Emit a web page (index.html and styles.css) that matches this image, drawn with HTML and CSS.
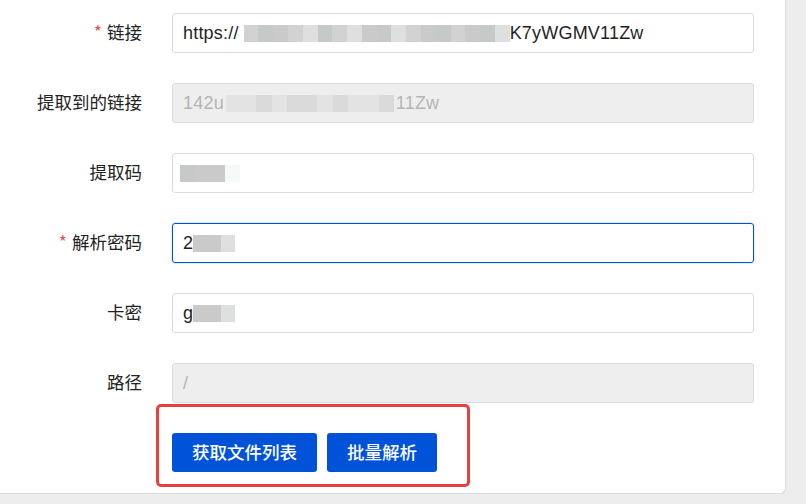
FILE: index.html
```
<html>
<head>
    <meta charset="UTF-8">
    <meta name="viewport" content="width=device-width, initial-scale=1.0">
    <link rel="stylesheet" href="styles.css">
</head>
<body>
    <div class="panel">
        <div class="form">
            <div class="row">
                <label class="label"><span class="req">*</span>链接</label>
                <div class="input">https://<span class="mosaic wide"><i class="c1"></i><i class="c2"></i><i class="c3"></i><i class="c1"></i><i class="c4"></i><i class="c2"></i><i class="c1"></i><i class="c4"></i><i class="c3"></i><i class="c2"></i><i class="c4"></i><i class="c1"></i><i class="c3"></i><i class="c2"></i><i class="c1"></i><i class="c3"></i><i class="c2"></i><i class="c4"></i></span>K7yWGMV11Zw</div>
            </div>
            <div class="row">
                <label class="label">提取到的链接</label>
                <div class="input disabled">142u<span class="mosaic mid"><i class="c5"></i><i class="c5"></i><i class="c6"></i><i class="c5"></i><i class="c6"></i><i class="c6"></i><i class="c5"></i><i class="c6"></i><i class="c5"></i><i class="c5"></i><i class="c6"></i></span>11Zw</div>
            </div>
            <div class="row">
                <label class="label">提取码</label>
                <div class="input"><span class="mosaic short"><i class="c2"></i><i class="c3"></i><i class="c3"></i><i class="c7"></i></span></div>
            </div>
            <div class="row">
                <label class="label"><span class="req">*</span>解析密码</label>
                <div class="input focus">2<span class="mosaic tiny"><i class="c3"></i><i class="c3"></i><i class="c4"></i></span></div>
            </div>
            <div class="row">
                <label class="label">卡密</label>
                <div class="input">g<span class="mosaic tiny"><i class="c3"></i><i class="c3"></i><i class="c4"></i></span></div>
            </div>
            <div class="row">
                <label class="label">路径</label>
                <div class="input disabled">/</div>
            </div>
        </div>
        <div class="mark">
            <button class="btn">获取文件列表</button>
            <button class="btn">批量解析</button>
        </div>
    </div>
</body>
</html>
```

FILE: styles.css
```
* {
    box-sizing: border-box;
}

body {
    margin: 0;
    background: #ededed;
    font-family: "Liberation Sans", "Noto Sans CJK SC", sans-serif;
    font-size: 17px;
    color: #222;
}

.panel {
    width: 786px;
    height: 494px;
    background: white;
    border-right: 1px solid #dcdcdc;
    border-bottom: 1px solid #dcdcdc;
    border-bottom-right-radius: 6px;
    padding-top: 13px;
}

.form {
    display: flex;
    flex-direction: column;
    gap: 30px;
}

.row {
    display: grid;
    grid-template-columns: 142px 582px;
    column-gap: 30px;
    align-items: center;
}

.label {
    text-align: right;
    font-family: "Noto Sans CJK SC", sans-serif;
    font-size: 17.5px;
    color: #222;
    padding-bottom: 3px;
}

.req {
    color: #e34d59;
    margin-right: 5px;
}

.input {
    height: 40px;
    border: 1px solid #dcdcdc;
    border-radius: 3px;
    padding: 0 10px;
    display: flex;
    align-items: center;
    white-space: nowrap;
    font-size: 18px;
    letter-spacing: 0.2px;
    color: #1f1f1f;
}

.input.disabled {
    background: #eeeeee;
    color: #b5b5b5;
}

.input.focus {
    border-color: #0052d9;
    box-shadow: 0 0 0 1px rgba(0, 82, 217, 0.12);
}

.mosaic {
    display: inline-flex;
    height: 17px;
    margin: 0 2px;
}

.mosaic i {
    flex: 1;
}

.wide { width: 266px; margin-left: 5px; margin-right: 0; }
.mid { width: 168px; }
.short { width: 60px; margin-left: -3px; }
.tiny { width: 42px; margin-left: 0; }

.c1 { background: #d2d2d2; }
.c2 { background: #c6c9c9; }
.c3 { background: #cbcaca; }
.c4 { background: #dedfdf; }
.c5 { background: #e3e3e3; }
.c6 { background: #dadada; }
.c7 { background: #f6f9fa; }

.mark {
    width: 314px;
    height: 83px;
    margin: 1px 0 0 156px;
    border: 3px solid #e8403f;
    border-radius: 5px;
    padding: 26px 0 0 13px;
    display: flex;
    gap: 10px;
    align-items: flex-start;
}

.btn {
    height: 39px;
    border: none;
    border-radius: 3px;
    background: #0052d9;
    color: white;
    font-family: "Noto Sans CJK SC", sans-serif;
    font-size: 17.5px;
    font-weight: 500;
    padding: 0 20px 2px;
}
```
